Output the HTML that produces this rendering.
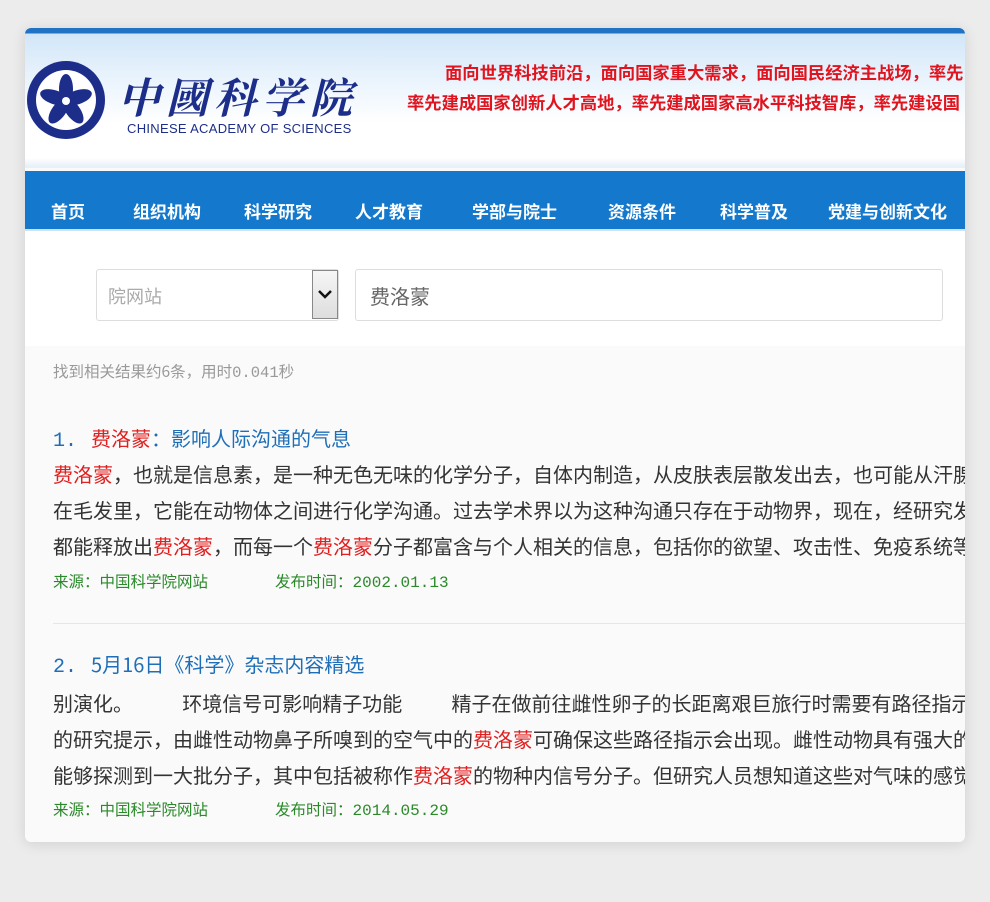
<!DOCTYPE html>
<html><head><meta charset="utf-8"><style>
body{margin:0;width:990px;height:902px;background:#ececec;font-family:"Liberation Sans","Noto Sans CJK SC",sans-serif;overflow:hidden;position:relative}
.card{position:absolute;left:25px;top:28px;width:940px;height:814px;background:#fafafa;border-radius:6px;overflow:hidden;box-shadow:0 2px 14px rgba(0,0,0,.12)}
.hdr{position:absolute;left:0;top:0;width:940px;height:140px;background:linear-gradient(#1f72c4 0,#1f72c4 5px,#d2e6f8 6px,#eef6fd 60px,#fff 95px,#fff 130px,#e8f1f9 138px)}
.nav{position:absolute;left:0;top:143px;width:940px;height:58px;background:#1479cc;border-bottom:2px solid #cfe3f4}
.nav span{position:absolute;top:27px;color:#fff;font-weight:bold;font-size:17px;white-space:nowrap}
.slogan{position:absolute;color:#e0141e;font-weight:bold;font-size:17.3px;white-space:nowrap}
.search{position:absolute;left:0;top:203px;width:940px;height:115px;background:#fff}
.t{position:absolute;left:28px;white-space:nowrap;font-family:"Noto Sans CJK SC",sans-serif}
.body{font-size:20px;color:#333;line-height:28px}
.r{color:#e02020}
.title{font-size:20px;color:#1f6fb8;line-height:28px}
.src{font-size:15.5px;color:#2a8a2a}
.m{font-family:"Liberation Mono",monospace}
</style></head><body>
<div class="card">
<div class="hdr">
<svg style="position:absolute;left:0;top:31px" width="82" height="82" viewBox="0 0 82 82">
<circle cx="41" cy="41" r="39" fill="#1d2e8a"/><circle cx="41" cy="41" r="30" fill="#fff"/>
<g fill="#1d2e8a" transform="translate(41,42)">
<ellipse rx="7" ry="15" transform="rotate(0) translate(0,-12)"/>
<ellipse rx="7" ry="15" transform="rotate(72) translate(0,-12)"/>
<ellipse rx="7" ry="15" transform="rotate(144) translate(0,-12)"/>
<ellipse rx="7" ry="15" transform="rotate(216) translate(0,-12)"/>
<ellipse rx="7" ry="15" transform="rotate(288) translate(0,-12)"/>
</g><circle cx="41" cy="42" r="4" fill="#fff"/>
</svg>
<div style="position:absolute;left:93px;top:38px;font-family:'Noto Serif CJK SC',serif;font-size:42px;color:#1d2e8a;letter-spacing:6px;font-weight:bold;font-style:italic">中國科学院</div>
<div style="position:absolute;left:102px;top:93px;font-size:13px;color:#1d2e8a;letter-spacing:.3px">CHINESE ACADEMY OF SCIENCES</div>
<div class="slogan" style="left:420px;top:31px">面向世界科技前沿，面向国家重大需求，面向国民经济主战场，率先</div>
<div class="slogan" style="left:382px;top:61px">率先建成国家创新人才高地，率先建成国家高水平科技智库，率先建设国</div>
</div>
<div class="nav">
<span style="left:26px">首页</span><span style="left:108px">组织机构</span><span style="left:219px">科学研究</span><span style="left:330px">人才教育</span><span style="left:447px">学部与院士</span><span style="left:583px">资源条件</span><span style="left:695px">科学普及</span><span style="left:803px">党建与创新文化</span>
</div>
<div class="search">
<div style="position:absolute;left:71px;top:38px;width:241px;height:50px;border:1px solid #ddd;border-radius:3px;background:#fff"></div>
<div style="position:absolute;left:83px;top:52px;font-size:18px;color:#aaa">院网站</div>
<div style="position:absolute;left:287px;top:39px;width:26px;height:49px;border:1px solid #888;background:linear-gradient(#f6f6f6,#ddd);box-sizing:border-box"></div>
<svg style="position:absolute;left:292px;top:57px" width="16" height="12"><path d="M2 3 L8 9 L14 3" stroke="#111" stroke-width="2.5" fill="none"/></svg>
<div style="position:absolute;left:330px;top:38px;width:586px;height:50px;border:1px solid #ddd;border-radius:3px;background:#fff"></div>
<div style="position:absolute;left:345px;top:50px;font-size:20px;color:#666">费洛蒙</div>
</div>
<div class="t" style="top:332px;font-size:15.5px;color:#999">找到相关结果约6条，用时<span class="m">0.041</span>秒</div>
<div class="t title" style="top:396px"><span class="m">1.</span><span style="display:inline-block;width:14px"></span><span class="r">费洛蒙</span>：影响人际沟通的气息</div>
<div class="t body" style="top:432px"><span class="r">费洛蒙</span>，也就是信息素，是一种无色无味的化学分子，自体内制造，从皮肤表层散发出去，也可能从汗腺</div>
<div class="t body" style="top:468px">在毛发里，它能在动物体之间进行化学沟通。过去学术界以为这种沟通只存在于动物界，现在，经研究发</div>
<div class="t body" style="top:504px">都能释放出<span class="r">费洛蒙</span>，而每一个<span class="r">费洛蒙</span>分子都富含与个人相关的信息，包括你的欲望、攻击性、免疫系统等</div>
<div class="t src" style="top:542px">来源：中国科学院网站<span style="display:inline-block;width:67px"></span>发布时间：<span class="m" style="font-size:16px">2002.01.13</span></div>
<div style="position:absolute;left:28px;top:595px;width:912px;border-top:1px solid #e6e6e6"></div>
<div class="t title" style="top:622px"><span class="m">2.</span><span style="display:inline-block;width:14px"></span>5月16日《科学》杂志内容精选</div>
<div class="t body" style="top:661px">别演化。&nbsp;&nbsp;&nbsp;&nbsp;&nbsp;&nbsp;&nbsp;&nbsp;&nbsp;&nbsp;&nbsp;环境信号可影响精子功能&nbsp;&nbsp;&nbsp;&nbsp;&nbsp;&nbsp;&nbsp;&nbsp;&nbsp;&nbsp;&nbsp;精子在做前往雌性卵子的长距离艰巨旅行时需要有路径指示</div>
<div class="t body" style="top:697px">的研究提示，由雌性动物鼻子所嗅到的空气中的<span class="r">费洛蒙</span>可确保这些路径指示会出现。雌性动物具有强大的</div>
<div class="t body" style="top:733px">能够探测到一大批分子，其中包括被称作<span class="r">费洛蒙</span>的物种内信号分子。但研究人员想知道这些对气味的感觉</div>
<div class="t src" style="top:770px">来源：中国科学院网站<span style="display:inline-block;width:67px"></span>发布时间：<span class="m" style="font-size:16px">2014.05.29</span></div>
</div>
</body></html>
